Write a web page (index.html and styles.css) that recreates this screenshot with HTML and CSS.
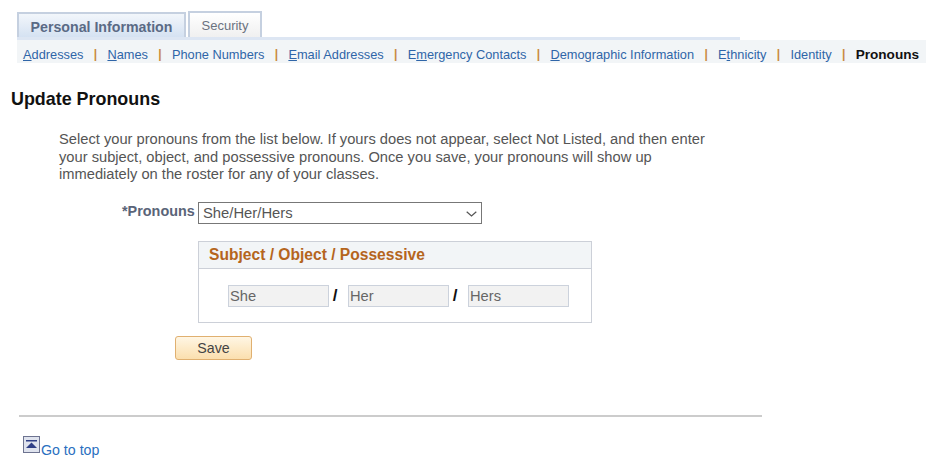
FILE: index.html
```html
<html lang="en">
<head>
  <meta charset="UTF-8">
  <title>Update Pronouns</title>
  <link rel="stylesheet" href="styles.css">
</head>
<body>
  <!-- Tabs -->
  <div class="tabs">
    <a class="tab tab-active">Personal Information</a>
    <a class="tab">Security</a>
  </div>
  <div class="tab-line"></div>

  <!-- Sub navigation -->
  <div class="subnav">
    <a><u>A</u>ddresses</a><span class="sep">|</span>
    <a><u>N</u>ames</a><span class="sep">|</span>
    <a>Phone Numbers</a><span class="sep">|</span>
    <a><u>E</u>mail Addresses</a><span class="sep">|</span>
    <a>E<u>m</u>ergency Contacts</a><span class="sep">|</span>
    <a><u>D</u>emographic Information</a><span class="sep">|</span>
    <a>E<u>t</u>hnicity</a><span class="sep">|</span>
    <a>Identity</a><span class="sep">|</span>
    <b>Pronouns</b>
  </div>

  <h1>Update Pronouns</h1>
  <p class="intro">Select your pronouns from the list below. If yours does not appear, select Not Listed, and then enter<br>your subject, object, and possessive pronouns. Once you save, your pronouns will show up<br>immediately on the roster for any of your classes.</p>

  <div class="field-row">
    <label class="field-label" for="pronouns">*Pronouns</label>
    <div class="select-wrap">
      <select id="pronouns" class="field-select">
        <option>She/Her/Hers</option>
      </select>
      <svg class="select-arrow" width="11" height="6" viewBox="0 0 11 6">
        <path d="M0.7 0.7 L5.5 5 L10.3 0.7" fill="none" stroke="#555" stroke-width="1.2"/>
      </svg>
    </div>
  </div>

  <div class="pronoun-box">
    <div class="box-title">Subject / Object / Possessive</div>
    <div class="box-body">
      <input class="pronoun-input" type="text" value="She" readonly>
      <span class="slash">/</span>
      <input class="pronoun-input" type="text" value="Her" readonly>
      <span class="slash">/</span>
      <input class="pronoun-input" type="text" value="Hers" readonly>
    </div>
  </div>

  <button class="btn-save">Save</button>

  <hr class="divider">

  <div class="go-top">
    <svg class="top-icon" width="17" height="17" viewBox="0 0 17 17">
      <rect x="0.5" y="0.5" width="16" height="16" fill="#dfe3ee" stroke="#6d7390"/>
      <rect x="3" y="4" width="11" height="1.5" fill="#2f3f86"/>
      <path d="M8.5 6.5 L14 12 H3 Z" fill="#2f3f86"/>
    </svg>
    <a class="top-link">Go to top</a>
  </div>
</body>
</html>
```

FILE: styles.css
```css
/* General */
body {
  font-family: "Liberation Sans", Arial, sans-serif;
  margin: 0;
  padding: 0;
  background-color: #fff;
  height: 466px;
  overflow: hidden;
}

/* Tabs */
.tabs {
  display: flex;
  align-items: flex-end;
  gap: 2px;
  margin-left: 17px;
  padding-top: 11px;
  height: 26px;
}

.tab {
  display: block;
  box-sizing: border-box;
  width: 74px;
  height: 26px;
  border: 2px solid #c5d0e0;
  border-bottom: none;
  background: linear-gradient(#fff, #f0f0f0);
  color: #6b7280;
  font-size: 13px;
  line-height: 26px;
  text-align: center;
}

.tab-active {
  width: 169px;
  height: 25px;
  background: linear-gradient(#f2f6fb, #d5e2f2);
  color: #5a6a85;
  font-size: 14.2px;
  font-weight: bold;
  line-height: 26px;
}

.tab-line {
  width: 723px;
  height: 3px;
  margin-left: 17px;
  background-color: #dde6f3;
}

/* Sub navigation */
.subnav {
  display: flex;
  align-items: center;
  box-sizing: border-box;
  width: 909px;
  height: 23px;
  margin-left: 17px;
  padding: 5px 0 0 6px;
  background-color: #f2f5f7;
  font-size: 12.8px;
  color: #2f65a8;
}

.subnav b {
  color: #111;
  font-size: 13.6px;
}

.sep {
  color: #c98a3e;
  font-weight: bold;
  font-size: 12px;
  margin: 0 10.3px;
}

/* Heading and intro */
h1 {
  margin: 26px 0 0 11px;
  font-size: 17.9px;
  line-height: 20px;
  color: #111;
}

.intro {
  margin: 22px 0 0 59px;
  font-size: 14.7px;
  line-height: 17.5px;
  color: #555;
}

/* Pronouns select */
.field-row {
  display: flex;
  align-items: center;
  margin: 18.5px 0 0 122px;
}

.field-label {
  width: 76px;
  margin-bottom: 4px;
  font-size: 14.4px;
  font-weight: bold;
  color: #5a6478;
}

.select-wrap {
  position: relative;
  width: 284px;
  height: 22px;
}

.field-select {
  appearance: none;
  box-sizing: border-box;
  width: 100%;
  height: 100%;
  padding: 0 4px;
  border: 1px solid #777;
  border-radius: 0;
  background-color: #fff;
  color: #555;
  font-family: inherit;
  font-size: 14.8px;
}

.select-arrow {
  position: absolute;
  top: 9px;
  right: 5px;
}

/* Subject / Object / Possessive box */
.pronoun-box {
  box-sizing: border-box;
  width: 394px;
  height: 82px;
  margin: 17px 0 0 198px;
  border: 1px solid #ccd0d8;
}

.box-title {
  height: 26px;
  line-height: 26px;
  padding-left: 10px;
  background-color: #f2f5f7;
  border-bottom: 1px solid #ccd0d8;
  color: #b5651d;
  font-size: 15.6px;
  font-weight: bold;
}

.box-body {
  display: flex;
  align-items: center;
  padding: 16px 0 0 29px;
}

.pronoun-input {
  box-sizing: border-box;
  width: 101px;
  height: 22px;
  padding: 0 1px;
  border: 1px solid #ccd2dc;
  background-color: #f2f2f2;
  color: #666;
  font-family: inherit;
  font-size: 14.7px;
}

.slash {
  width: 19px;
  padding-right: 7px;
  box-sizing: border-box;
  text-align: center;
  font-size: 17px;
  font-weight: bold;
  color: #111;
}

/* Save button */
.btn-save {
  display: block;
  box-sizing: border-box;
  width: 77px;
  height: 24px;
  margin: 13px 0 0 175px;
  border: 1px solid #e0b070;
  border-radius: 3px;
  background: linear-gradient(#fff6e4, #fbdfae);
  color: #444;
  font-family: inherit;
  font-size: 14.2px;
}

/* Footer */
.divider {
  width: 743px;
  height: 2px;
  margin: 55px 0 0 19px;
  border: none;
  background-color: #ccc;
}

.go-top {
  display: flex;
  align-items: flex-start;
  margin: 19px 0 0 23px;
  font-size: 14.2px;
  color: #2a6fc0;
}

.top-icon {
  margin-right: 1px;
}

.top-link {
  margin-top: 6px;
}
```
